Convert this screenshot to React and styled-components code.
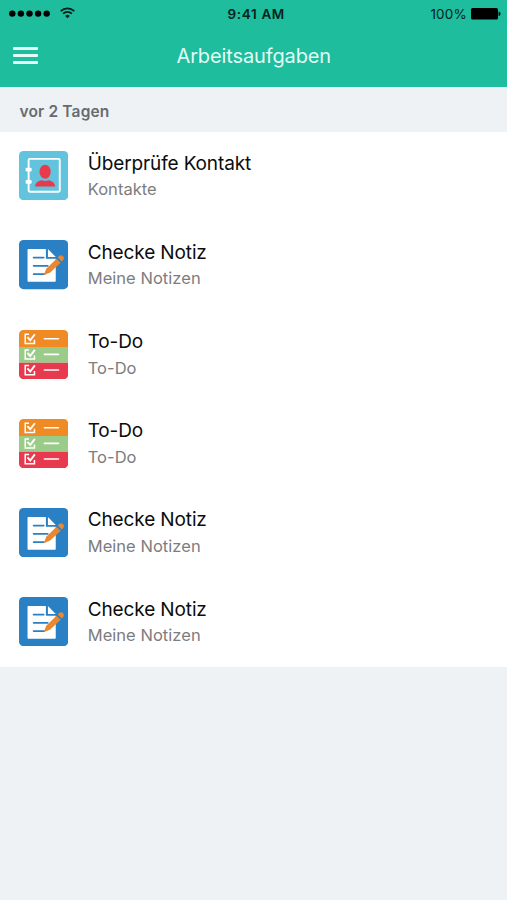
import React from "react";
import styled, { createGlobalStyle } from "styled-components";

const GlobalStyle = createGlobalStyle`
  body {
    margin: 0;
    background: #eef2f5;
    font-family: Inter, "Liberation Sans", sans-serif;
  }

  * {
    box-sizing: border-box;
  }
`;

const Screen = styled.div`
  display: flex;
  flex-direction: column;
  width: 100%;
  min-height: 900px;
  background: #eef2f5;
`;

const Header = styled.header`
  height: 86.5px;
  background: #1dbd9d;
`;

const StatusBar = styled.div`
  display: grid;
  grid-template-columns: 1fr auto 1fr;
  align-items: center;
  height: 27px;
  padding: 0 6.5px 0 9px;
  color: #06221c;
`;

const StatusGroup = styled.div`
  display: flex;
  align-items: center;
  justify-content: ${props => props.$end ? "flex-end" : "flex-start"};
  gap: ${props => props.$end ? "3.5px" : "9px"};

  svg {
    display: block;
  }
`;

const Clock = styled.span`
  padding-left: 3px;
  font-size: 13.5px;
  font-weight: 600;
  letter-spacing: 0.65px;
`;

const Percent = styled.span`
  font-size: 13.5px;
  letter-spacing: 0.2px;
`;

const NavBar = styled.div`
  display: grid;
  grid-template-columns: 1fr auto 1fr;
  align-items: center;
  height: 58px;
  padding: 0 12.5px 0 13px;
`;

const MenuButton = styled.button`
  display: flex;
  flex-direction: column;
  gap: 4px;
  width: 25px;
  padding: 0 0 1px;
  border: 0;
  background: none;

  span {
    height: 3px;
    border-radius: 1px;
    background: #e2fbf5;
  }
`;

const Title = styled.h1`
  margin: 0;
  color: #e2fbf5;
  font-size: 20px;
  font-weight: 400;
  line-height: 28px;
  letter-spacing: -0.12px;
`;

const SectionHeader = styled.h2`
  height: 45px;
  margin: 0;
  padding: 2.5px 19.5px 0;
  color: #666b70;
  font-size: 15.5px;
  font-weight: 600;
  line-height: 45px;
  letter-spacing: 0.16px;
`;

const TaskList = styled.ul`
  margin: 0;
  padding: 0;
  background: #fff;
  list-style: none;
`;

const TaskRow = styled.li`
  display: flex;
  gap: 19.5px;
  height: 89.2px;
  padding: 19.8px 19px 0;

  svg {
    flex: none;
    width: 49.2px;
    height: 49.2px;
  }
`;

const TaskText = styled.div`
  display: flex;
  flex-direction: column;
`;

const TaskName = styled.span`
  padding-top: 0.3px;
  color: #0c0c0c;
  font-size: 19px;
  line-height: 24px;
  letter-spacing: -0.12px;
`;

const TaskSource = styled.span`
  margin-top: 2.7px;
  color: #7d7d7d;
  font-size: 16.5px;
  line-height: 22px;
  letter-spacing: 0.04px;
`;

const ContactIcon = () => (
  <svg viewBox="0 0 49 49">
    <rect width="49" height="49" rx="4.5" fill="#61c3dc" />
    <rect x="9.6" y="7.8" width="31" height="32.8" rx="1.2" fill="none" stroke="#fff" strokeWidth="1.9" />
    <rect x="6.6" y="16.6" width="6" height="3.8" rx="1" fill="#fff" />
    <rect x="6.6" y="28.8" width="6" height="3.8" rx="1" fill="#fff" />
    <ellipse cx="26" cy="20.6" rx="5.6" ry="7" fill="#ea394c" />
    <path d="M16 35.4c.2-3.7 3.2-5.6 6.8-6.2 2 .8 4.4.8 6.4 0 3.6.6 6.6 2.5 6.8 6.2z" fill="#ea394c" />
  </svg>
);

const NoteIcon = () => (
  <svg viewBox="0 0 49 49">
    <rect width="49" height="49" rx="4.5" fill="#2a80c5" />
    <path d="M9.5 9h17.3v9.6h9.8V40.6c0 .6-.4 1-1 1H9.5c-.6 0-1-.4-1-1V10c0-.6.4-1 1-1z" fill="#fff" />
    <path d="M28.8 9l7.8 7.9h-7.8z" fill="#fff" />
    <path d="M14.6 17.5h10M14.6 25.7h14M14.6 33.9h10.5" stroke="#2a80c5" strokeWidth="1.8" strokeLinecap="round" />
    <path d="M24.7 35.2l2.4-6.5L37.4 18.6l4.1 4.1-10.4 9.8z" fill="#ea8731" />
    <path d="M38.5 17.4l1.5-1.4c1.2-1.2 3-.9 4 .2 1 1.2 1 2.8 0 3.8l-1.4 1.5z" fill="#ea8731" />
  </svg>
);

const TodoIcon = () => (
  <svg viewBox="0 0 49 49">
    <path d="M0 17V4.5A4.5 4.5 0 014.5 0h40A4.5 4.5 0 0149 4.5V17z" fill="#ef8a25" />
    <path d="M0 17h49v15.6H0z" fill="#9acb88" />
    <path d="M0 32.6h49v11.9a4.5 4.5 0 01-4.5 4.5h-40A4.5 4.5 0 010 44.5z" fill="#e83a4f" />
    {[0, 15.6, 31.1].map(y => (
      <g key={y} transform={`translate(0 ${y})`} fill="none" stroke="#fff">
        <path d="M10 4.3H6.2v9.1h9.2V9.8" strokeWidth="1.5" />
        <path d="M8.4 7.1l2.8 3.1 4.6-6" strokeWidth="1.9" />
        <path d="M25.3 8.7h14" strokeWidth="1.6" strokeLinecap="round" />
      </g>
    ))}
  </svg>
);

const SignalDots = () => (
  <svg width="42" height="8" viewBox="0 0 42 8">
    {[3.3, 11.9, 20.5, 29.1, 37.7].map(x => <circle key={x} cx={x} cy="3.6" r="3.2" fill="#000" />)}
  </svg>
);

const WifiIcon = () => (
  <svg width="15" height="13" viewBox="0 0 15 13">
    <path d="M.7 4.1a9.7 9.7 0 0113.6 0M3.1 6.6a6.3 6.3 0 018.8 0" fill="none" stroke="#06221c" strokeWidth="1.7" />
    <path d="M7.5 11.3L5.2 8.9a3.3 3.3 0 014.6 0z" fill="#06221c" />
  </svg>
);

const BatteryIcon = () => (
  <svg width="30" height="12" viewBox="0 0 30 12">
    <rect width="27" height="11.6" rx="1.6" fill="#000" />
    <path d="M27.9 3.9a2 2 0 010 3.8z" fill="#000" stroke="#000" strokeWidth=".6" />
  </svg>
);

const icons = {
  contact: ContactIcon,
  note: NoteIcon,
  todo: TodoIcon,
};

const tasks = [
  { id: 1, name: "Überprüfe Kontakt", source: "Kontakte", icon: "contact" },
  { id: 2, name: "Checke Notiz", source: "Meine Notizen", icon: "note" },
  { id: 3, name: "To-Do", source: "To-Do", icon: "todo" },
  { id: 4, name: "To-Do", source: "To-Do", icon: "todo" },
  { id: 5, name: "Checke Notiz", source: "Meine Notizen", icon: "note" },
  { id: 6, name: "Checke Notiz", source: "Meine Notizen", icon: "note" },
];

const App = () => (
  <Screen>
    <GlobalStyle />
    <Header>
      <StatusBar>
        <StatusGroup>
          <SignalDots />
          <WifiIcon />
        </StatusGroup>
        <Clock>9:41 AM</Clock>
        <StatusGroup $end>
          <Percent>100%</Percent>
          <BatteryIcon />
        </StatusGroup>
      </StatusBar>
      <NavBar>
        <MenuButton aria-label="Menü">
          <span />
          <span />
          <span />
        </MenuButton>
        <Title>Arbeitsaufgaben</Title>
      </NavBar>
    </Header>
    <SectionHeader>vor 2 Tagen</SectionHeader>
    <TaskList>
      {tasks.map(task => {
        const Icon = icons[task.icon];
        return (
          <TaskRow key={task.id}>
            <Icon />
            <TaskText>
              <TaskName>{task.name}</TaskName>
              <TaskSource>{task.source}</TaskSource>
            </TaskText>
          </TaskRow>
        );
      })}
    </TaskList>
  </Screen>
);

export default App;
